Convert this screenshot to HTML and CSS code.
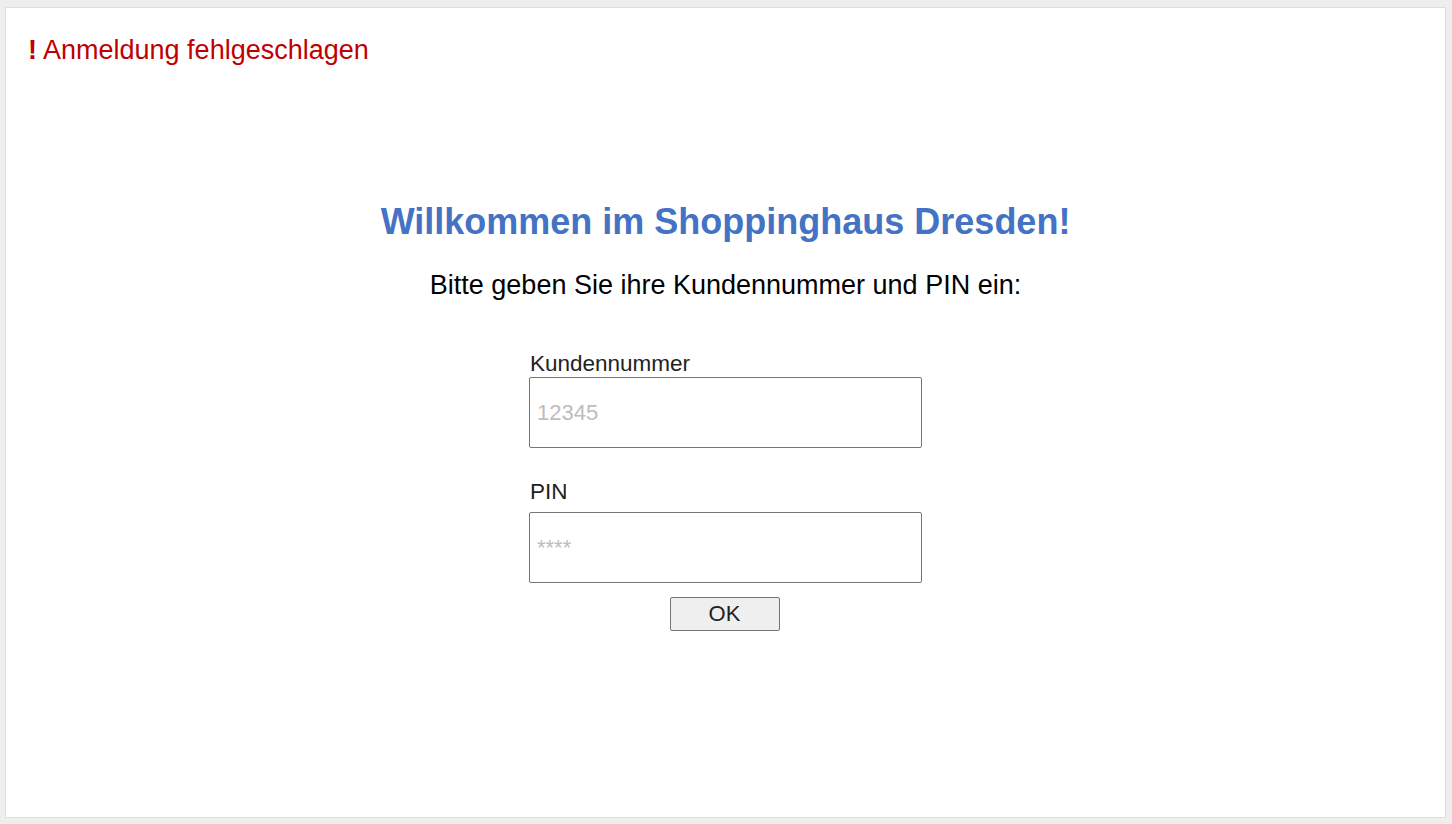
FILE: index.html
```html
<!DOCTYPE html>
<html lang="de">
<head>
<meta charset="utf-8">
<title>Shoppinghaus Dresden</title>
<link rel="stylesheet" href="styles.css">
</head>
<body>
<div class="panel">
  <p class="error"><span class="bang">!</span> Anmeldung fehlgeschlagen</p>
  <div class="content">
    <h1 class="title">Willkommen im Shoppinghaus Dresden!</h1>
    <p class="intro">Bitte geben Sie ihre Kundennummer und PIN ein:</p>
    <form class="form">
      <label class="label" for="kn">Kundennummer</label>
      <input class="field" id="kn" type="text" placeholder="12345">
      <label class="label label-pin" for="pin">PIN</label>
      <input class="field" id="pin" type="password" placeholder="****">
      <button class="ok" type="button">OK</button>
    </form>
  </div>
</div>
</body>
</html>
```
FILE: styles.css
```css
html, body {
  margin: 0;
  padding: 0;
  background: #eeeeee;
  font-family: "Liberation Sans", Arial, sans-serif;
}
body {
  padding: 7px 6px 6px 5px;
  height: 824px;
  box-sizing: border-box;
}
.panel {
  background: #ffffff;
  border: 1px solid #dedede;
  height: 100%;
  box-sizing: border-box;
  padding: 27px 22px;
}
.error {
  margin: 0;
  color: #c00000;
  font-size: 27px;
  line-height: 30px;
}
.bang {
  font-weight: bold;
}
.content {
  display: flex;
  flex-direction: column;
  align-items: center;
  padding-top: 136px;
}
.title {
  margin: 0;
  color: #4472c4;
  font-size: 36px;
  line-height: 42px;
  font-weight: bold;
}
.intro {
  margin: 27px 0 0;
  font-size: 27px;
  line-height: 30px;
  color: #000;
}
.form {
  margin-top: 51px;
  display: flex;
  flex-direction: column;
  width: 393px;
}
.label {
  font-size: 22.5px;
  line-height: 26px;
  color: #222;
  padding-left: 1px;
}
.label-pin {
  margin-top: 31px;
  margin-bottom: 7px;
}
.field {
  box-sizing: border-box;
  width: 393px;
  height: 71px;
  margin: 0;
  border: 1px solid #767676;
  border-radius: 2px;
  padding: 0 7px;
  font-family: "Liberation Sans", Arial, sans-serif;
  font-size: 22px;
  color: #222;
  background: #fff;
}
.field::placeholder {
  color: #bdbdbd;
}
.ok {
  align-self: center;
  margin-top: 14px;
  margin-right: 2px;
  width: 110px;
  height: 34px;
  background: #efefef;
  border: 1px solid #767676;
  border-radius: 2px;
  font-family: "Liberation Sans", Arial, sans-serif;
  font-size: 22px;
  color: #222;
  padding: 0;
}
```
